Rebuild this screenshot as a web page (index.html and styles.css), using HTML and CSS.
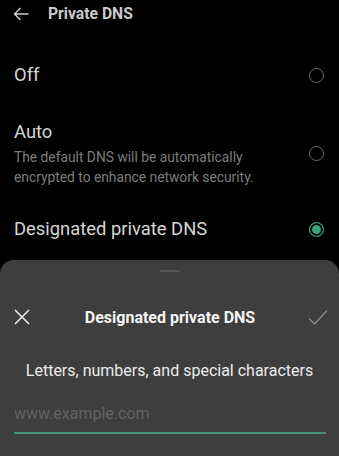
FILE: index.html
```html
<!DOCTYPE html>
<html>
<head>
<meta charset="utf-8">
<link rel="stylesheet" href="styles.css">
</head>
<body>
<div class="screen">
  <div class="topbar">
    <svg class="back" width="16" height="14" viewBox="0 0 16 14"><path d="M15.5 7H1.5M7.5 1L1.5 7L7.5 13" fill="none" stroke="#cfcfcf" stroke-width="1.4"/></svg>
    <div class="topbar-title">Private DNS</div>
  </div>
  <div class="option option-off">
    <div class="option-text"><div class="option-title">Off</div></div>
    <span class="radio"></span>
  </div>
  <div class="option option-auto">
    <div class="option-text">
      <div class="option-title">Auto</div>
      <div class="option-desc">The default DNS will be automatically encrypted to enhance network security.</div>
    </div>
    <span class="radio"></span>
  </div>
  <div class="option option-designated">
    <div class="option-text"><div class="option-title">Designated private DNS</div></div>
    <span class="radio radio-on"></span>
  </div>
  <div class="sheet">
    <div class="handle"></div>
    <div class="sheet-head">
      <svg class="icon" width="16" height="16" viewBox="0 0 16 16"><path d="M1 1L15 15M15 1L1 15" fill="none" stroke="#f2f2f2" stroke-width="1.5"/></svg>
      <div class="sheet-title">Designated private DNS</div>
      <svg class="icon" width="20" height="17" viewBox="0 0 20 17"><path d="M1 9.5L6.5 15L19 1.5" fill="none" stroke="#8a8a8a" stroke-width="1.4"/></svg>
    </div>
    <div class="sheet-hint">Letters, numbers, and special characters</div>
    <div class="field">www.example.com</div>
  </div>
</div>
</body>
</html>
```

FILE: styles.css
```css
html, body {
  margin: 0;
  padding: 0;
  background: #000;
}
.screen {
  width: 339px;
  height: 456px;
  overflow: hidden;
  display: flex;
  flex-direction: column;
  font-family: Roboto, "Liberation Sans", sans-serif;
  background: #000;
}
.topbar {
  height: 27px;
  display: flex;
  align-items: center;
  padding-left: 13px;
}
.back {
  display: block;
}
.topbar-title {
  margin-left: 19px;
  font-size: 15.7px;
  font-weight: 700;
  color: #c9c9c9;
}
.option {
  display: flex;
  align-items: center;
  padding: 0 15px 0 14px;
}
.option-text {
  flex: 1;
}
.option-title {
  font-size: 18.4px;
  line-height: 24px;
  color: #d6d6d6;
}
.option-desc {
  font-size: 13.8px;
  line-height: 20px;
  color: #7d7d7d;
  padding-right: 30px;
  margin-top: 3px;
}
.option-off {
  margin-top: 23px;
  height: 50px;
}
.option-auto {
  padding-top: 20px;
  height: 67px;
}
.option-designated {
  padding-top: 30px;
  height: 24px;
}
.radio {
  width: 13px;
  height: 13px;
  border: 1.2px solid #6a6a6a;
  border-radius: 50%;
  box-sizing: content-box;
  flex: none;
}
.radio-on {
  border-color: #3aa57c;
  background: #3aa57c;
  box-shadow: inset 0 0 0 2px #000;
}
.sheet {
  margin-top: 19px;
  flex: 1;
  background: #3e3e3e;
  border-radius: 14px 14px 0 0;
  display: flex;
  flex-direction: column;
}
.handle {
  width: 20px;
  height: 2px;
  background: #585858;
  border-radius: 1px;
  margin: 10px auto 0;
}
.sheet-head {
  margin-top: 27px;
  height: 36px;
  display: flex;
  align-items: center;
  justify-content: space-between;
  padding: 0 11px 0 14px;
}
.icon {
  display: block;
}
.sheet-title {
  font-size: 16px;
  font-weight: 700;
  color: #f4f4f4;
  margin-left: 2px;
}
.sheet-hint {
  margin-top: 25px;
  text-align: center;
  font-size: 16px;
  line-height: 22px;
  color: #ececec;
}
.field {
  margin: 21px 13px 0 14px;
  font-size: 16px;
  line-height: 22px;
  color: #636363;
  padding-bottom: 7px;
  border-bottom: 2px solid #3d9877;
}
```
